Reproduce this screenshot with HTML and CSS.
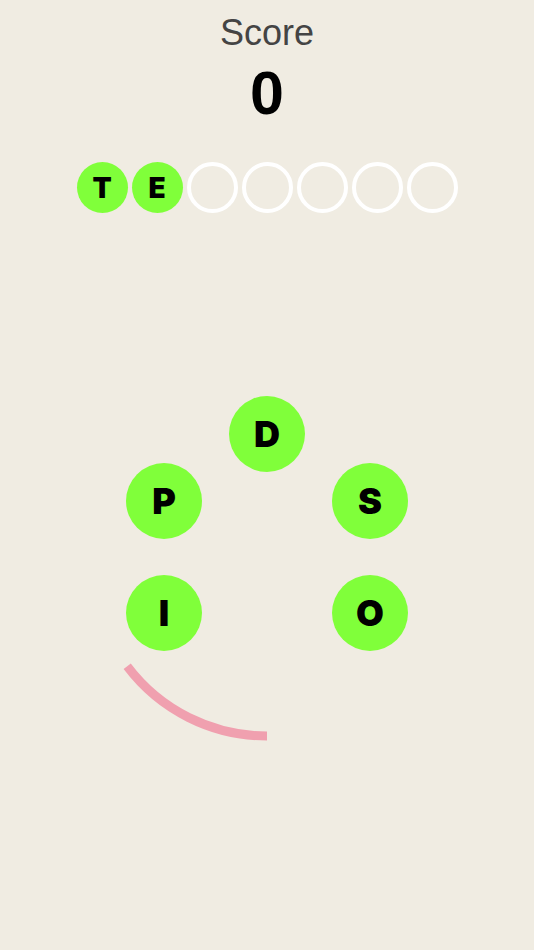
FILE: index.html
```html
<!DOCTYPE html>
<html>
<head>
<meta charset="utf-8">
<link rel="stylesheet" href="styles.css">
</head>
<body>
<div class="page">
  <div class="score-label">Score</div>
  <div class="score-value">0</div>
  <div class="slots">
    <div class="slot filled">T</div>
    <div class="slot filled">E</div>
    <div class="slot"></div>
    <div class="slot"></div>
    <div class="slot"></div>
    <div class="slot"></div>
    <div class="slot"></div>
  </div>
  <div class="wheel">
    <svg class="timer" width="534" height="400" viewBox="0 0 534 400">
      <path d="M127.2 286.3 A175 175 0 0 0 267 356" fill="none" stroke="#f0a0af" stroke-width="9"/>
    </svg>
    <div class="tile t-d">D</div>
    <div class="tile t-p">P</div>
    <div class="tile t-s">S</div>
    <div class="tile t-i">I</div>
    <div class="tile t-o">O</div>
  </div>
</div>
</body>
</html>
```

FILE: styles.css
```css
html, body {
  margin: 0;
  padding: 0;
  background: #f0ece2;
}
.page {
  width: 534px;
  height: 950px;
  display: flex;
  flex-direction: column;
  align-items: center;
  font-family: "Liberation Sans", Arial, sans-serif;
}
.score-label {
  padding-top: 11.5px;
  font-size: 36px;
  line-height: 42px;
  color: #444444;
}
.score-value {
  margin-top: 4.7px;
  font-size: 61px;
  line-height: 70px;
  font-weight: bold;
  color: #000;
}
.slots {
  margin-top: 34px;
  display: flex;
  gap: 4px;
}
.slot {
  width: 51px;
  height: 51px;
  box-sizing: border-box;
  border-radius: 50%;
  border: 4px solid #ffffff;
  display: flex;
  align-items: center;
  justify-content: center;
  font-family: Inter, "Noto Sans", sans-serif;
  font-weight: 900;
  font-size: 28px;
  line-height: 1;
  color: #000;
}
.slot.filled {
  border: none;
  background: #80ff3a;
}
.wheel {
  position: relative;
  margin-top: 167px;
  width: 534px;
  height: 400px;
}
.timer {
  position: absolute;
  left: 0;
  top: 0;
}
.tile {
  position: absolute;
  width: 76px;
  height: 76px;
  border-radius: 50%;
  background: #80ff3a;
  display: flex;
  align-items: center;
  justify-content: center;
  font-family: Inter, "Noto Sans", sans-serif;
  font-weight: 900;
  font-size: 36px;
  line-height: 1;
  color: #000;
}
.t-d { left: 229px; top: 16px; }
.t-p { left: 126px; top: 83px; }
.t-s { left: 332px; top: 83px; }
.t-i { left: 126px; top: 195px; }
.t-o { left: 332px; top: 195px; }
```
